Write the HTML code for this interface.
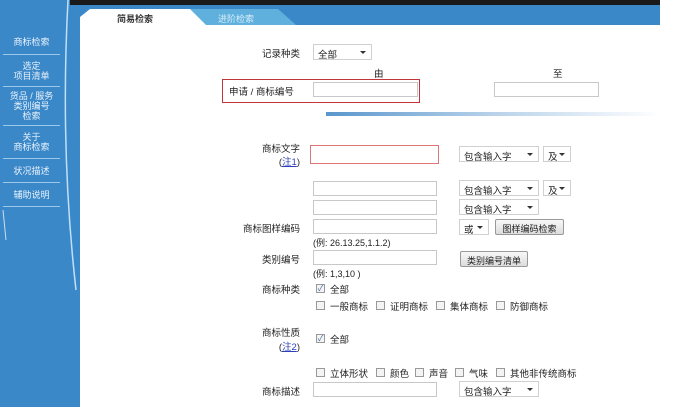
<!DOCTYPE html><html><head><meta charset="utf-8"><style>
*{margin:0;padding:0;box-sizing:border-box}
body{width:677px;height:407px;position:relative;overflow:hidden;background:#fff;font-family:"Liberation Sans","Noto Sans CJK SC",sans-serif;font-size:9.5px;color:#222}
.a{position:absolute;white-space:nowrap}
.side{position:absolute;left:0;top:0;width:80px;height:407px;background:#3b88c9}
.mi{position:absolute;left:3px;width:57px;color:#e8f2fb;text-align:center;font-size:9px;line-height:10px;border-bottom:1px solid #9cc8ec;display:flex;align-items:center;justify-content:center}
.in{position:absolute;height:15px;border:1px solid #c8c8c8;background:#fff}
.sel{position:absolute;height:16px;border:1px solid #d0d0d0;background:#fff;font-size:9.5px;padding:2px 0 0 4px}
.sel:after{content:"";position:absolute;right:5px;top:6px;border:3px solid transparent;border-top:3px solid #333}
.btn{position:absolute;height:16px;border:1px solid #999;background:linear-gradient(#f8f8f8,#dcdcdc);font-size:9px;text-align:center;padding-top:2px;border-radius:2px}
.cb{position:absolute;width:9px;height:9px;border:1px solid #999;background:#f4f4f4;font-size:8px;line-height:7px;color:#4466aa;text-align:center}
.lbl{position:absolute;text-align:right;width:90px;font-size:9.5px}
a{color:#2a3fb8;text-decoration:underline}
</style></head><body>
<div class="side"></div>
<svg class="a" style="left:0;top:0" width="80" height="407"><path d="M68 0 Q60 150 76 290" stroke="#bfe0f8" stroke-width="1.5" fill="none"/><path d="M3 210 L6 240" stroke="#cde" stroke-width="1" fill="none"/></svg>
<div class="mi" style="top:30px;height:25px">商标检索</div>
<div class="mi" style="top:55px;height:32px">选定<br>项目清单</div>
<div class="mi" style="top:87px;height:39px">货品 / 服务<br>类别编号<br>检索</div>
<div class="mi" style="top:126px;height:33px">关于<br>商标检索</div>
<div class="mi" style="top:159px;height:24px">状况描述</div>
<div class="mi" style="top:183px;height:24px">辅助说明</div>
<div class="a" style="left:70px;top:0;width:590px;height:5px;background:#1a1a1a"></div>
<div class="a" style="left:72px;top:5px;width:588px;height:20px;background:#3b88c9"></div>
<svg class="a" style="left:78px;top:9px" width="220" height="16"><path d="M110 0 L200 0 L218 16 L125 16 Z" fill="#5fb0dc"/><path d="M12 0 L112 0 L128 16 L2 16 L2 8 Z" fill="#fff"/></svg>
<div class="a" style="left:117px;top:12px;font-size:9px;font-weight:bold;color:#333">简易检索</div>
<div class="a" style="left:218px;top:12px;font-size:9px;color:#d8eefa">进阶检索</div>
<div class="a" style="left:80px;top:25px;width:580px;height:382px;background:#fff"></div>

<div class="lbl" style="left:210px;top:46px">记录种类</div>
<div class="sel" style="left:313px;top:44px;width:59px">全部</div>
<div class="a" style="left:374px;top:66px">由</div>
<div class="a" style="left:553px;top:66px">至</div>
<div class="a" style="left:222px;top:79px;width:198px;height:24px;border:1px solid #c0363a"></div>
<div class="a" style="left:229px;top:84px">申请 / 商标编号</div>
<div class="in" style="left:313px;top:82px;width:105px"></div>
<div class="in" style="left:494px;top:82px;width:105px"></div>
<div class="a" style="left:326px;top:112px;width:334px;height:4px;background:linear-gradient(90deg,#5a96cc,#b8d2ea 50%,#fff)"></div>

<div class="lbl" style="left:210px;top:141px">商标文字</div>
<div class="lbl" style="left:210px;top:154px">(<a>注1</a>)</div>
<div class="in" style="left:310px;top:145px;width:129px;height:19px;border-color:#e07575"></div>
<div class="sel" style="left:459px;top:146px;width:80px">包含输入字</div>
<div class="sel" style="left:543px;top:146px;width:28px">及</div>
<div class="in" style="left:313px;top:181px;width:124px"></div>
<div class="sel" style="left:459px;top:180px;width:80px">包含输入字</div>
<div class="sel" style="left:543px;top:180px;width:28px">及</div>
<div class="in" style="left:313px;top:200px;width:124px"></div>
<div class="sel" style="left:459px;top:199px;width:80px">包含输入字</div>
<div class="lbl" style="left:210px;top:221px">商标图样编码</div>
<div class="in" style="left:313px;top:219px;width:124px"></div>
<div class="sel" style="left:459px;top:219px;width:30px">或</div>
<div class="btn" style="left:495px;top:219px;width:69px">图样编码检索</div>
<div class="a" style="left:313px;top:236px;font-size:9px">(例: 26.13.25,1.1.2)</div>
<div class="lbl" style="left:210px;top:252px">类别编号</div>
<div class="in" style="left:313px;top:250px;width:124px"></div>
<div class="btn" style="left:460px;top:251px;width:68px">类别编号清单</div>
<div class="a" style="left:313px;top:267px;font-size:9px">(例: 1,3,10 )</div>

<div class="lbl" style="left:210px;top:282px">商标种类</div>
<div class="cb" style="left:316px;top:284px">✓</div><div class="a" style="left:330px;top:282px">全部</div>
<div class="cb" style="left:316px;top:301px"></div><div class="a" style="left:330px;top:299px">一般商标</div>
<div class="cb" style="left:376px;top:301px"></div><div class="a" style="left:390px;top:299px">证明商标</div>
<div class="cb" style="left:436px;top:301px"></div><div class="a" style="left:450px;top:299px">集体商标</div>
<div class="cb" style="left:496px;top:301px"></div><div class="a" style="left:510px;top:299px">防御商标</div>

<div class="lbl" style="left:210px;top:325px">商标性质</div>
<div class="lbl" style="left:210px;top:339px">(<a>注2</a>)</div>
<div class="cb" style="left:316px;top:334px">✓</div><div class="a" style="left:330px;top:332px">全部</div>
<div class="cb" style="left:316px;top:368px"></div><div class="a" style="left:330px;top:366px">立体形状</div>
<div class="cb" style="left:376px;top:368px"></div><div class="a" style="left:390px;top:366px">颜色</div>
<div class="cb" style="left:415px;top:368px"></div><div class="a" style="left:429px;top:366px">声音</div>
<div class="cb" style="left:455px;top:368px"></div><div class="a" style="left:469px;top:366px">气味</div>
<div class="cb" style="left:496px;top:368px"></div><div class="a" style="left:510px;top:366px">其他非传统商标</div>
<div class="lbl" style="left:210px;top:384px">商标描述</div>
<div class="in" style="left:313px;top:382px;width:124px"></div>
<div class="sel" style="left:459px;top:381px;width:80px">包含输入字</div>
</body></html>
